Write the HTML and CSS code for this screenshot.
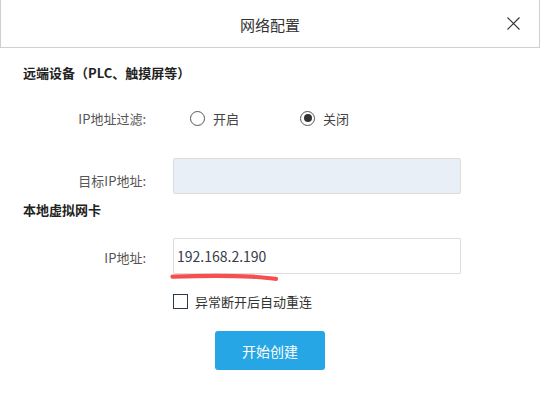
FILE: index.html
```html
<!DOCTYPE html>
<html lang="zh-CN">
<head>
    <meta charset="UTF-8">
    <meta name="viewport" content="width=device-width, initial-scale=1.0">
    <title>网络配置</title>
    <link rel="stylesheet" href="styles.css">
</head>
<body>
    <div class="dialog">
        <!-- Header -->
        <div class="header">
            <span></span>
            <span class="title">网络配置</span>
            <button class="close" type="button" aria-label="关闭">
                <svg width="13" height="13" viewBox="0 0 13 13">
                    <path d="M0.5 0.5 L12.5 12.5 M12.5 0.5 L0.5 12.5" stroke="#333" stroke-width="1.1" fill="none"/>
                </svg>
            </button>
        </div>

        <div class="body">
            <!-- Remote device -->
            <h3 class="section">远端设备（PLC、触摸屏等）</h3>

            <div class="row row-radio">
                <span class="label">IP地址过滤:</span>
                <div class="radios">
                    <label class="radio"><span class="dot"></span>开启</label>
                    <label class="radio checked"><span class="dot"></span>关闭</label>
                </div>
            </div>

            <div class="row row-target">
                <span class="label">目标IP地址:</span>
                <input class="field disabled" type="text" disabled>
            </div>

            <!-- Local virtual NIC -->
            <h3 class="section section-local">本地虚拟网卡</h3>

            <div class="row row-ip">
                <span class="label">IP地址:</span>
                <div class="field-wrap">
                    <input class="field" type="text" value="192.168.2.190">
                    <svg class="mark" width="112" height="10" viewBox="0 0 112 10">
                        <path d="M2.5 3.6 C30 2.8 60 2.6 82 3.6 C92 4.2 100 5.4 106 5.8" stroke="#f5504f" stroke-width="4.2" stroke-linecap="round" fill="none"/>
                    </svg>
                </div>
            </div>

            <div class="row row-check">
                <span class="label"></span>
                <label class="check"><span class="box"></span>异常断开后自动重连</label>
            </div>

            <div class="actions">
                <button class="primary" type="button">开始创建</button>
            </div>
        </div>
    </div>
</body>
</html>
```

FILE: styles.css
```css
body {
    margin: 0;
    background-color: #fff;
    font-family: 'Noto Sans CJK SC', 'Noto Sans', sans-serif;
    color: #333;
}

.dialog {
    width: 540px;
}

.header {
    display: grid;
    grid-template-columns: 1fr auto 1fr;
    align-items: center;
    height: 47px;
    border: 1px solid #cfcfcf;
    border-top: none;
    box-sizing: content-box;
}

.title {
    font-size: 15px;
    color: #333;
    padding-top: 1px;
}

.close {
    justify-self: end;
    margin-right: 19px;
    padding: 0;
    border: none;
    background: none;
    display: flex;
    cursor: pointer;
}

.body {
    padding-top: 15px;
}

.section {
    margin: 0 0 0 23px;
    font-size: 13px;
    line-height: 20px;
    font-weight: bold;
    color: #222;
}

.row {
    display: flex;
    align-items: center;
}

.label {
    width: 146px;
    text-align: right;
    font-size: 13px;
    color: #555;
    margin-right: 27px;
    flex-shrink: 0;
}

.row-radio {
    height: 30px;
    margin-top: 20px;
}

.radios {
    display: flex;
    padding-left: 17px;
}

.radio {
    display: flex;
    align-items: center;
    font-size: 13px;
    color: #444;
    width: 110px;
}

.radio .dot {
    width: 15px;
    height: 15px;
    border: 1px solid #555;
    border-radius: 50%;
    box-sizing: border-box;
    margin-right: 8px;
    position: relative;
}

.radio.checked .dot::after {
    content: "";
    position: absolute;
    left: 2.5px;
    top: 2.5px;
    width: 8px;
    height: 8px;
    border-radius: 50%;
    background-color: #333;
}

.row-target {
    margin-top: 25px;
}

.row-target .label {
    padding-top: 8px;
}

.field {
    width: 288px;
    height: 36px;
    box-sizing: border-box;
    border: 1px solid #dcdcdc;
    border-radius: 2px;
    padding: 0 3px;
    font-family: inherit;
    font-size: 14px;
    color: #3a3a48;
    background-color: #fff;
    outline: none;
}

.field.disabled {
    background-color: #e9eff7;
}

.section-local {
    margin-top: 6px;
}

.row-ip {
    margin-top: 18px;
}

.row-ip .label {
    padding-top: 3px;
}

.field-wrap {
    position: relative;
}

.mark {
    position: absolute;
    left: -3px;
    top: 35px;
}

.row-check {
    height: 20px;
    margin-top: 17px;
}

.check {
    display: flex;
    align-items: center;
    font-size: 13px;
    color: #333;
}

.check .box {
    width: 15px;
    height: 15px;
    border: 1px solid #2b3a4a;
    box-sizing: border-box;
    margin-right: 7px;
}

.actions {
    display: flex;
    justify-content: center;
    margin-top: 20px;
}

.primary {
    width: 110px;
    height: 39px;
    border: none;
    border-radius: 3px;
    background-color: #26a6e4;
    color: #fff;
    font-family: inherit;
    font-size: 14px;
    cursor: pointer;
}
```
